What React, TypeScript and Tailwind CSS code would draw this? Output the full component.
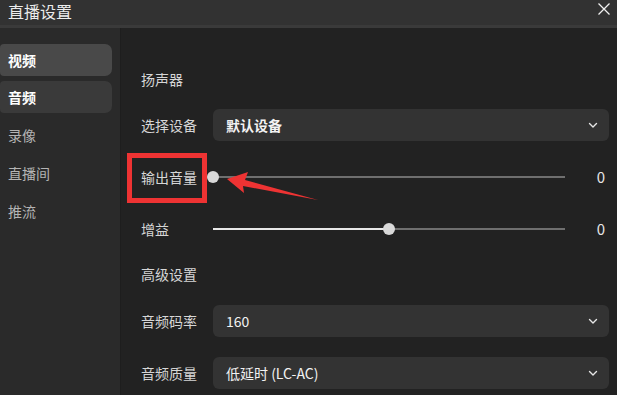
import React from 'react'

const FONT = { fontFamily: '"Noto Sans CJK SC", "Noto Sans", sans-serif' }

const NAV = [
  { label: '视频', state: 'active' },
  { label: '音频', state: 'hover' },
  { label: '录像', state: '' },
  { label: '直播间', state: '' },
  { label: '推流', state: '' },
]

function Chevron() {
  return (
    <svg width="12" height="12" viewBox="0 0 12 12" fill="none">
      <path d="M2.5 4.5 L6 8 L9.5 4.5" stroke="#e6e6e6" strokeWidth="1.4" strokeLinecap="round" strokeLinejoin="round" />
    </svg>
  )
}

function Select({ value, className = '' }: { value: string; className?: string }) {
  return (
    <div className={`flex-1 h-[32px] rounded-[6px] bg-[#333333] flex items-center justify-between pl-[13px] pr-[10px] ${className}`}>
      <span className="text-[14px] text-[#f2f2f2]">{value}</span>
      <Chevron />
    </div>
  )
}

function Slider({ pct }: { pct: number }) {
  return (
    <div className="flex-1 flex items-center">
      <div className="relative w-[352px] h-[2px] bg-[#6f6f6f]">
        <div className="absolute left-0 top-0 h-[2px] bg-[#e8e8e8]" style={{ width: `${pct}%` }} />
        <div
          className="absolute top-1/2 w-[12px] h-[12px] -mt-[6px] -ml-[6px] rounded-full bg-[#d9d9d9]"
          style={{ left: `${pct}%` }}
        />
      </div>
      <span className="ml-auto mr-[4px] text-[15px] text-[#e6e6e6]">0</span>
    </div>
  )
}

function Row({ label, children, className = '' }: { label: string; children?: React.ReactNode; className?: string }) {
  return (
    <div className={`flex items-center h-[32px] ${className}`}>
      <span className="w-[72px] text-[14px] text-[#d6d6d6]">{label}</span>
      {children}
    </div>
  )
}

export default function App() {
  return (
    <div className="relative w-[617px] h-[395px] flex flex-col overflow-hidden bg-[#222222] select-none" style={FONT}>
      {/* Title bar */}
      <div className="h-[28px] shrink-0 bg-[#323232] border-b-[3px] border-[#3a3a3a] flex items-center justify-between pl-[8px] pr-[6px]">
        <span className="text-[16px] leading-none text-[#ececec] -mt-[4px]">直播设置</span>
        <svg width="14" height="14" viewBox="0 0 14 14" className="-mt-[7px]">
          <path d="M1.5 1.5 L12.5 12.5 M12.5 1.5 L1.5 12.5" stroke="#f0f0f0" strokeWidth="1.3" />
        </svg>
      </div>

      <div className="flex flex-1 min-h-0">
        {/* Sidebar */}
        <aside className="w-[121px] shrink-0 bg-[#2a2a2a] border-r border-[#1e1e1e] pt-[16px] pr-[8px] flex flex-col">
          {NAV.map(({ label, state }) => (
            <div
              key={label}
              className={`h-[32px] flex items-center pl-[8px] rounded-r-[7px] rounded-l-[4px] text-[14px] ${
                state === 'active'
                  ? 'bg-[#494949] text-white font-bold mb-[5px]'
                  : state === 'hover'
                  ? 'bg-[#3a3a3a] text-white font-bold mb-[6px]'
                  : 'text-[#b4b4b4] mb-[6px]'
              }`}
            >
              {label}
            </div>
          ))}
        </aside>

        {/* Content */}
        <main className="flex-1 pl-[20px] pr-[8px] pt-[35px] flex flex-col">
          <Row label="扬声器" />
          <Row label="选择设备" className="mt-[14px]">
            <Select value="默认设备" className="font-bold" />
          </Row>
          <Row label="输出音量" className="mt-[20px]">
            <Slider pct={0} />
          </Row>
          <Row label="增益" className="mt-[20px]">
            <Slider pct={50} />
          </Row>
          <Row label="高级设置" className="mt-[13px]" />
          <Row label="音频码率" className="mt-[15px]">
            <Select value="160" />
          </Row>
          <Row label="音频质量" className="mt-[20px]">
            <Select value="低延时 (LC-AC)" />
          </Row>
        </main>
      </div>

      {/* Annotation overlay */}
      <div className="absolute left-[127px] top-[153px] w-[80px] h-[50px] border-[5px] border-[#ee3333]" />
      <svg className="absolute left-0 top-0 pointer-events-none" width="617" height="395">
        <polygon
          points="227,179 248,172 245,180 318,200 243,186 244,193"
          fill="#ee3333"
        />
      </svg>
    </div>
  )
}
